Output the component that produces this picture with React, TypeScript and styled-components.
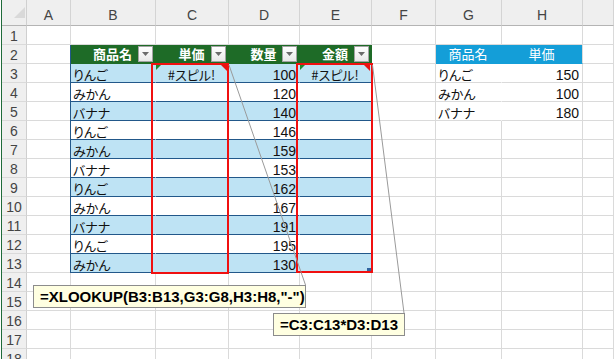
import React from 'react';
import styled, { createGlobalStyle, css } from 'styled-components';

const GRID = '#dadada';
const HEAD_BG = '#efefef';
const GREEN = '#1e6b27';
const BAND = '#bee3f4';
const TABLE_LINE = '#22588a';
const CYAN = '#149ed8';

const GlobalStyle = createGlobalStyle`
  html, body { margin: 0; padding: 0; background: #fff; }
  body { width: 614px; height: 359px; overflow: hidden; }
`;

type Kind = 'plain' | 'thead' | 'tbody' | 'ghead' | 'gbody';
type Align = 'left' | 'right' | 'center';

const Page = styled.div`
  position: relative;
  width: 612px;
  height: 359px;
  margin-left: 1px;
  border-left: 1px solid #1f6b3a;
  overflow: hidden;
  font-family: "Liberation Sans", "Noto Sans CJK JP", sans-serif;
`;

const Sheet = styled.div`
  display: grid;
  grid-template-columns: 25px 44px 85px 73px 71px 72px 64px 66px 81px 1fr;
  grid-template-rows: 26px repeat(18, 19px);
`;

const Corner = styled.div`
  box-sizing: border-box;
  background: ${HEAD_BG};
  border-right: 1px solid #d0d0d0;
  border-bottom: 1px solid #b4b4b4;
  display: flex;
  justify-content: flex-end;
  align-items: flex-end;
  padding: 0 1px 7px 0;
`;

const ColHead = styled.div`
  box-sizing: border-box;
  background: ${HEAD_BG};
  border-right: 1px solid #d4d4d4;
  border-bottom: 1px solid #b4b4b4;
  display: flex;
  justify-content: center;
  align-items: flex-end;
  padding-bottom: 2px;
  font-size: 14px;
  line-height: 16px;
  color: #444;
`;

const RowHead = styled.div`
  box-sizing: border-box;
  background: ${HEAD_BG};
  border-right: 1px solid #cfcfcf;
  border-bottom: 1px solid ${GRID};
  display: flex;
  justify-content: center;
  align-items: flex-end;
  font-size: 14px;
  line-height: 16px;
  color: #444;
`;

const Cell = styled.div<{
  $kind: Kind;
  $align: Align;
  $band?: boolean;
  $edge?: boolean;
  $noRight?: boolean;
  $marks?: boolean;
  $handle?: boolean;
}>`
  position: relative;
  box-sizing: border-box;
  display: flex;
  align-items: flex-end;
  justify-content: ${p => (p.$align === 'right' ? 'flex-end' : p.$align === 'center' ? 'center' : 'flex-start')};
  padding: 0 3px 0 2px;
  font-size: 14px;
  line-height: 14px;
  color: #111;
  white-space: nowrap;
  background: #fff;
  border-right: 1px solid ${GRID};
  border-bottom: 1px solid ${GRID};
  ${p => p.$kind === 'thead' && css`
    background: ${GREEN};
    border-right-color: ${GREEN};
    border-bottom-color: ${GREEN};
    color: #fff;
    font-weight: bold;
    align-items: center;
    line-height: 18px;
  `}
  ${p => p.$kind === 'tbody' && css`
    background: ${p.$band ? BAND : '#fff'};
    border-right-color: ${p.$band ? BAND : '#fff'};
    border-bottom-color: ${TABLE_LINE};
  `}
  ${p => p.$kind === 'ghead' && css`
    background: ${CYAN};
    border-bottom-color: ${CYAN};
    color: #fff;
    align-items: center;
    line-height: 18px;
  `}
  ${p => p.$noRight && css`
    border-right-color: ${p.$kind === 'ghead' ? CYAN : '#fff'};
  `}
  ${p => p.$edge && css`
    box-shadow: -1px 0 0 ${TABLE_LINE};
  `}
  ${p => p.$marks && css`
    &::before {
      content: '';
      position: absolute;
      left: 0;
      top: 1px;
      border-top: 5px solid #1f8a2e;
      border-right: 5px solid transparent;
    }
    &::after {
      content: '';
      position: absolute;
      right: 1px;
      top: 1px;
      border-top: 6px solid #e81010;
      border-left: 6px solid transparent;
    }
  `}
  ${p => p.$handle && css`
    &::after {
      content: '';
      position: absolute;
      right: 0;
      bottom: 0;
      width: 4px;
      height: 4px;
      background: #2f64a0;
    }
  `}
`;

const Jp = styled.span<{ $size?: number }>`
  font-family: "Noto Sans CJK JP", sans-serif;
  font-feature-settings: "palt";
  font-size: ${p => p.$size ?? 13}px;
`;

const FilterButton = styled.span`
  position: absolute;
  right: 2px;
  top: 1px;
  width: 15px;
  height: 16px;
  box-sizing: border-box;
  border: 1px solid #a3a3a3;
  background: linear-gradient(#ffffff, #e9e9e9);
  display: flex;
  align-items: center;
  justify-content: center;
`;

const Overlay = styled.div`
  position: absolute;
  left: -2px;
  top: 0;
  width: 614px;
  height: 359px;
  pointer-events: none;
`;

/* the red spill-range outline lies over the table cells */
const SpillFrame = styled.div<{ $x: number; $w: number; $h: number }>`
  position: absolute;
  left: ${p => p.$x}px;
  top: 63px;
  width: ${p => p.$w}px;
  height: ${p => p.$h}px;
  box-sizing: border-box;
  border: 2px solid #f01010;
`;

const Connectors = styled.svg`
  position: absolute;
  left: 0;
  top: 0;
`;

/* floating formula notes over the sheet */
const Note = styled.div<{ $x: number; $y: number; $w: number }>`
  position: absolute;
  left: ${p => p.$x}px;
  top: ${p => p.$y}px;
  width: ${p => p.$w}px;
  height: 23px;
  box-sizing: border-box;
  background: #ffffe1;
  border: 1px solid #8c8c8c;
  display: flex;
  align-items: center;
  padding-left: 6px;
  font-family: "Liberation Sans", sans-serif;
  font-weight: bold;
  font-size: 15px;
  line-height: 18px;
  color: #000;
  white-space: nowrap;
`;

const COLS = ['A', 'B', 'C', 'D', 'E', 'F', 'G', 'H', ''];
const NAMES = ['りんご', 'みかん', 'バナナ', 'りんご', 'みかん', 'バナナ', 'りんご', 'みかん', 'バナナ', 'りんご', 'みかん'];
const QTY = [100, 120, 140, 146, 159, 153, 162, 167, 191, 195, 130];
const HEADS = ['商品名', '単価', '数量', '金額'];
const PRICES: [string, number][] = [['りんご', 150], ['みかん', 100], ['バナナ', 180]];

interface Spec {
  kind: Kind;
  align: Align;
  content?: React.ReactNode;
  band?: boolean;
  edge?: boolean;
  noRight?: boolean;
  filter?: boolean;
  marks?: boolean;
  handle?: boolean;
}

const FilterArrow = () => (
  <svg width="7" height="4" viewBox="0 0 7 4">
    <polygon points="0,0 7,0 3.5,4" fill="#6b6b6b" />
  </svg>
);

function specFor(r: number, ci: number): Spec {
  if (r === 2 && ci >= 1 && ci <= 4) {
    return { kind: 'thead', align: 'center', content: <Jp>{HEADS[ci - 1]}</Jp>, edge: ci === 1, filter: true };
  }
  if (r >= 3 && r <= 13 && ci >= 1 && ci <= 4) {
    const i = r - 3;
    const base = { kind: 'tbody' as Kind, band: r % 2 === 1, edge: ci === 1 };
    if (ci === 1) return { ...base, align: 'left', content: <Jp>{NAMES[i]}</Jp> };
    if (ci === 3) return { ...base, align: 'right', content: QTY[i] };
    if (r === 3) return { ...base, align: 'center', content: <Jp>#スピル!</Jp>, marks: true };
    return { ...base, align: 'left', handle: ci === 4 && r === 13 };
  }
  if (r === 2 && (ci === 6 || ci === 7)) {
    return { kind: 'ghead', align: 'center', content: <Jp>{ci === 6 ? '商品名' : '単価'}</Jp>, noRight: ci === 6 };
  }
  if (r >= 3 && r <= 5 && (ci === 6 || ci === 7)) {
    const [name, price] = PRICES[r - 3];
    if (ci === 6) return { kind: 'gbody', align: 'left', content: <Jp>{name}</Jp>, noRight: true };
    return { kind: 'gbody', align: 'right', content: price };
  }
  return { kind: 'plain', align: 'left' };
}

export default function App() {
  const cells: React.ReactNode[] = [];
  cells.push(
    <Corner key="corner">
      <svg width="11" height="11" viewBox="0 0 11 11">
        <polygon points="0,11 11,11 11,0" fill="#d9d9d9" />
      </svg>
    </Corner>
  );
  COLS.forEach((c, i) => cells.push(<ColHead key={'ch' + i}>{c}</ColHead>));
  for (let r = 1; r <= 18; r++) {
    cells.push(<RowHead key={'rh' + r}>{r}</RowHead>);
    COLS.forEach((_, ci) => {
      const s = specFor(r, ci);
      cells.push(
        <Cell
          key={r + '-' + ci}
          $kind={s.kind}
          $align={s.align}
          $band={s.band}
          $edge={s.edge}
          $noRight={s.noRight}
          $marks={s.marks}
          $handle={s.handle}
        >
          {s.content}
          {s.filter && (
            <FilterButton>
              <FilterArrow />
            </FilterButton>
          )}
        </Cell>
      );
    });
  }

  return (
    <>
      <GlobalStyle />
      <Page>
        <Sheet>{cells}</Sheet>
        <Overlay>
          <SpillFrame $x={151} $w={78} $h={211} />
          <SpillFrame $x={296} $w={77} $h={210} />
          <Connectors width="614" height="359" viewBox="0 0 614 359">
            <line x1="229" y1="65" x2="305.5" y2="285" stroke="#9a9a9a" strokeWidth="1" />
            <line x1="372.5" y1="65" x2="404" y2="313" stroke="#9a9a9a" strokeWidth="1" />
          </Connectors>
          <Note $x={33} $y={285} $w={273}>=XLOOKUP(B3:B13,G3:G8,H3:H8,"-")</Note>
          <Note $x={273} $y={313} $w={132}>=C3:C13*D3:D13</Note>
        </Overlay>
      </Page>
    </>
  );
}
